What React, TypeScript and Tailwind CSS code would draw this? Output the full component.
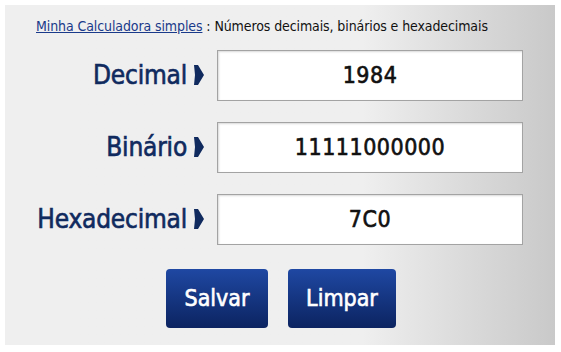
import { useState } from "react";

const font = { fontFamily: '"DejaVu Sans Condensed", "Liberation Sans Narrow", "Liberation Sans", sans-serif' };

function Arrow() {
  return (
    <svg width="12" height="22" viewBox="0 0 12 22" className="shrink-0">
      <path d="M1 1 L5 1 L11 11 L5 21 L1 21 L2 11 Z" fill="#102a5e" />
    </svg>
  );
}

function Row({ label, value, onChange }: { label: string; value: string; onChange: (v: string) => void }) {
  return (
    <div className="flex items-center h-[50px]">
      <div className="w-[212px] flex items-center justify-end gap-[6px] pr-[12px]">
        <span className="text-[26px] leading-none text-[#102a5e] tracking-[-0.2px] [-webkit-text-stroke:0.6px_#102a5e]">{label}</span>
        <Arrow />
      </div>
      <input
        value={value}
        onChange={(e) => onChange(e.target.value)}
        className="w-[306px] h-[51px] bg-white border border-[#a3a3a3] shadow-[inset_1px_1px_2px_rgba(0,0,0,0.15)] text-center text-[23px] tracking-[0.5px] text-[#111] outline-none [-webkit-text-stroke:0.6px_#111]"
        style={font}
      />
    </div>
  );
}

export default function App() {
  const [dec, setDec] = useState("1984");
  const [bin, setBin] = useState("11111000000");
  const [hex, setHex] = useState("7C0");

  return (
    <div className="w-[561px] h-[352px] bg-white p-[5px]" style={font}>
      <div className="w-[550px] h-[340px] bg-gradient-to-r from-[#efefef] from-65% to-[#c9c9c9] flex flex-col">
        {/* Title */}
        <div className="pt-[12px] pl-[31px] text-[14px] leading-[18px] text-[#111] tracking-[-0.1px]">
          <a href="#" className="text-[#1a3a8a] underline">Minha Calculadora simples</a> : Números decimais, binários e hexadecimais
        </div>

        {/* Fields */}
        <div className="mt-[15px] flex flex-col gap-[22px]">
          <Row label="Decimal" value={dec} onChange={setDec} />
          <Row label="Binário" value={bin} onChange={setBin} />
          <Row label="Hexadecimal" value={hex} onChange={setHex} />
        </div>

        {/* Buttons */}
        <div className="mt-[25px] flex gap-[20px] pl-[161px]">
          <button className="w-[102px] h-[59px] rounded-[4px] bg-gradient-to-b from-[#1f48a3] to-[#0c2461] text-white text-[23px] [-webkit-text-stroke:0.6px_white]">
            Salvar
          </button>
          <button className="w-[108px] h-[59px] rounded-[4px] bg-gradient-to-b from-[#1f48a3] to-[#0c2461] text-white text-[23px] [-webkit-text-stroke:0.6px_white]">
            Limpar
          </button>
        </div>
      </div>
    </div>
  );
}
